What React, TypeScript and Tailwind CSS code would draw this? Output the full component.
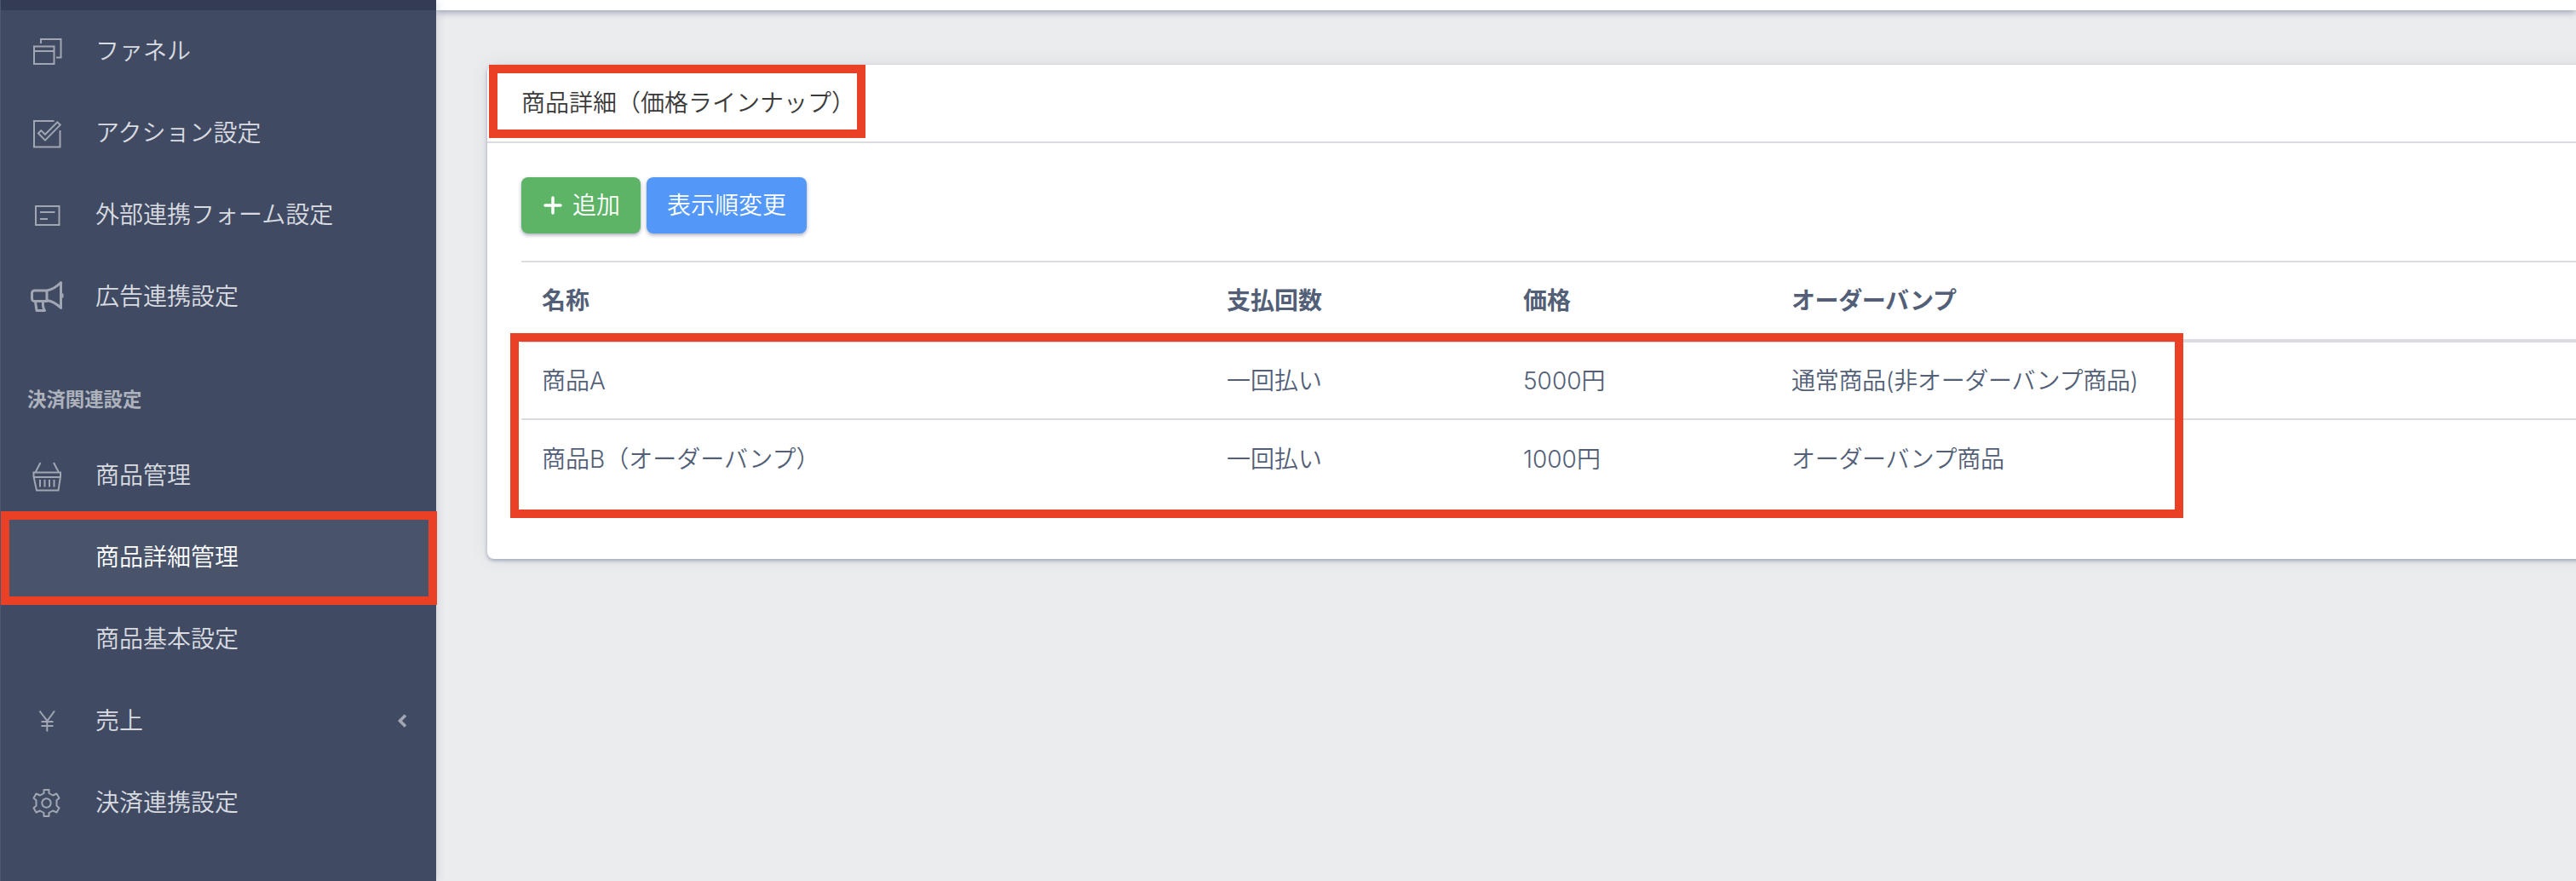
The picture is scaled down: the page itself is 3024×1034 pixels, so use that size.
import React from 'react';

type IconName = 'funnel' | 'action' | 'form' | 'megaphone' | 'basket' | 'yen' | 'gear';

interface MenuItem {
  label: string;
  icon?: IconName;
  active?: boolean;
  expandable?: boolean;
}

interface Product {
  name: string;
  payment: string;
  price: string;
  orderBump: string;
}

const mainMenu: MenuItem[] = [
  { label: 'ファネル', icon: 'funnel' },
  { label: 'アクション設定', icon: 'action' },
  { label: '外部連携フォーム設定', icon: 'form' },
  { label: '広告連携設定', icon: 'megaphone' },
];

const paymentMenu: MenuItem[] = [
  { label: '商品管理', icon: 'basket' },
  { label: '商品詳細管理', active: true },
  { label: '商品基本設定' },
  { label: '売上', icon: 'yen', expandable: true },
  { label: '決済連携設定', icon: 'gear' },
];

const products: Product[] = [
  { name: '商品A', payment: '一回払い', price: '5000円', orderBump: '通常商品(非オーダーバンプ商品)' },
  { name: '商品B（オーダーバンプ）', payment: '一回払い', price: '1000円', orderBump: 'オーダーバンプ商品' },
];

function MenuIcon({ name }: { name: IconName }) {
  return (
    <svg viewBox="0 0 40 40" className="w-10 h-10" fill="none" stroke="currentColor" strokeWidth={2}>
      {name === 'funnel' && (
        <>
          <path d="M5 14.500h23.500v20.500H5z M5 20h23.500" />
          <path d="M13 11V6h23.500v21.500h-5.500" />
        </>
      )}
      {name === 'action' && (
        <>
          <path d="M28.500 6H5v30.500h30.500V17" />
          <path d="M10 20.500l3.200-3.400 4.800 4.700L32.300 7.300l3.400 3.300-17.700 18z" />
        </>
      )}
      {name === 'form' && <path d="M7 10h27.500v22H7z M12 17h17.500 M12 25h9" />}
      {name === 'megaphone' && (
        <>
          <path strokeWidth={3} strokeLinejoin="round" d="M20 13v12.500H5.500a3 3 0 0 1-3-3V16a3 3 0 0 1 3-3z M20 13c7-1 11.500-4.500 16.500-9.500v30c-5-5-9.500-8-16.500-9" />
          <path strokeWidth={3} strokeLinejoin="round" d="M6.500 26l1.500 10.500h9.500c-2-3-2.500-6-2-10.500" />
          <path strokeWidth={3} d="M38 16.500v5" />
        </>
      )}
      {name === 'basket' && (
        <>
          <path d="M4.500 16.500h31.500v5l-2.500 16H8L4.500 21.500z M4.500 22h31.500" />
          <path d="M6.500 16.500l6-11.500 M34 16.500L28 5" />
          <path d="M12 25v8.500 M17.500 25v8.500 M23 25v8.500 M28.500 25v8.500" />
        </>
      )}
      {name === 'yen' && <path d="M11.500 8.500l9 11.500 8.500-11.500 M20.300 20v12.500 M13.500 21h14 M13.500 26h14" />}
      {name === 'gear' && (
        <>
          <circle cx="19.500" cy="20.500" r="5.200" />
          <path
            strokeLinejoin="round"
            d="M16.500 5h6v4l4.500 2.500 4.500-2 3 5.200-3 2.500v6.600l3 2.500-3 5.200-4.500-2-4.500 2.500v4h-6v-4l-4.500-2.500-4.500 2-3-5.200 3-2.500v-6.600l-3-2.500 3-5.200 4.500 2 4.500-2.500z"
          />
        </>
      )}
    </svg>
  );
}

function SidebarRow({ item }: { item: MenuItem }) {
  return (
    <li
      className={`flex items-center h-24 pl-[34px] pr-[34px] ${
        item.active ? 'bg-[#49546b] text-white' : 'text-[#d9dbe0]'
      }`}
    >
      <span className="w-[77px] text-[#a0a6b2]">{item.icon && <MenuIcon name={item.icon} />}</span>
      <span className="flex-1">{item.label}</span>
      {item.expandable && (
        <svg viewBox="0 0 12 18" className="w-3 h-4.5 text-[#a0a6b2]" fill="none" stroke="currentColor" strokeWidth={3.6}>
          <path d="M10 2.500L3.500 9l6.500 6.500" />
        </svg>
      )}
    </li>
  );
}

function Sidebar() {
  return (
    <aside className="w-[512px] shrink-0 bg-[#404b63] border-l border-[#4c5970] shadow-[0_0_10px_rgba(70,80,110,0.22)] z-10">
      <div className="h-3 bg-[#333c54]" />
      <ul>
        {mainMenu.map(item => <SidebarRow key={item.label} item={item} />)}
      </ul>
      <h5 className="h-[114px] pt-8 pl-[31px] flex items-center text-[22.4px] leading-none font-bold text-[#aeb2bc]">決済関連設定</h5>
      <ul>
        {paymentMenu.map(item => <SidebarRow key={item.label} item={item} />)}
      </ul>
    </aside>
  );
}

function ProductTable() {
  return (
    <table className="mt-8 w-[2600px] table-fixed border-collapse text-left text-[#535f77]">
      <colgroup>
        <col className="w-[804px]" />
        <col className="w-[348px]" />
        <col className="w-[315px]" />
        <col />
      </colgroup>
      <thead>
        <tr className="h-[93px] border-t-2 border-b-4 border-[#dadce1] font-bold">
          <th className="px-6">名称</th>
          <th className="px-6">支払回数</th>
          <th className="px-6">価格</th>
          <th className="px-6 tracking-[-0.4px]">オーダーバンプ</th>
        </tr>
      </thead>
      <tbody>
        {products.map(product => (
          <tr key={product.name} className="h-23 border-b-2 border-[#dadce1] last:border-b-0">
            <td className="px-6">{product.name}</td>
            <td className="px-6">{product.payment}</td>
            <td className="px-6">{product.price}</td>
            <td className="px-6 tracking-[-0.3px]">{product.orderBump}</td>
          </tr>
        ))}
      </tbody>
    </table>
  );
}

export default function App() {
  return (
    <div className="relative flex w-[3024px] h-[1034px] overflow-hidden bg-[#ebecee] text-[28px] leading-[42px] font-[350] font-['Inter','Noto_Sans_CJK_JP',sans-serif]">
      <Sidebar />

      <div className="flex-1 min-w-0">
        <header className="h-3 bg-white shadow-[0_2px_8px_rgba(60,75,110,0.5)]" />

        {/* Product detail card, runs past the right edge */}
        <main className="mt-16 ml-15 w-[2700px] h-[580px] rounded-lg bg-white shadow-[0_2px_4px_rgba(60,75,110,0.4),0_0_20px_rgba(60,75,110,0.1)]">
          <div className="flex items-center h-23 pl-10 border-b-2 border-[#dadce1] text-[#3a3a3a]">
            商品詳細（価格ラインナップ）
          </div>
          <div className="pl-10 pt-10">
            <div className="flex gap-[7px] text-white">
              <button className="flex items-center justify-center gap-3 w-[140px] h-[66px] pl-0.5 rounded-lg bg-[#5db467] shadow-[0_2px_4px_rgba(60,70,110,0.45)]">
                <svg viewBox="0 0 22 22" className="w-[22px] h-[22px]" fill="none" stroke="currentColor" strokeWidth={3.5} strokeLinecap="round">
                  <path d="M11 2v18M2 11h18" />
                </svg>
                追加
              </button>
              <button className="w-[188px] h-[66px] rounded-lg bg-[#5397f8] shadow-[0_2px_4px_rgba(60,70,110,0.45)]">
                表示順変更
              </button>
            </div>
            <ProductTable />
          </div>
        </main>
      </div>

      {/* Highlight frames */}
      <div className="absolute z-20 left-px top-[600px] w-[512px] h-[110px] border-10 border-[#ea4025]" />
      <div className="absolute z-20 left-[574px] top-[76px] w-[442px] h-[86px] border-10 border-[#ea4025]" />
      <div className="absolute z-20 left-[599px] top-[391px] w-[1964px] h-[217px] border-10 border-[#ea4025]" />
    </div>
  );
}
